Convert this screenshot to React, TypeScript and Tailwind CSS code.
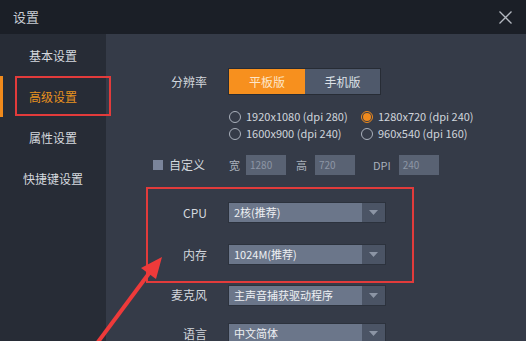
import React from "react";

const font = { fontFamily: '"Noto Sans CJK SC", "Noto Sans", sans-serif' };

const menu = ["基本设置", "高级设置", "属性设置", "快捷键设置"];

function Select({ value }: { value: string }) {
  return (
    <div className="flex h-[19px] w-[156px] shadow-[0_0_0_1px_#2c323d]">
      <div className="flex-1 bg-[#6b768a] text-[11px] leading-[19px] text-[#eef0f3] pl-[5px]">{value}</div>
      <div className="w-[23px] bg-[#4b5465] flex items-center justify-center">
        <svg width="9" height="5" viewBox="0 0 9 5">
          <path d="M0 0h9L4.5 5z" fill="#8c95a5" />
        </svg>
      </div>
    </div>
  );
}

function Radio({ label, checked }: { label: string; checked?: boolean }) {
  return (
    <div className="flex items-center h-[17px] text-[11px] text-[#d0d5dc]">
      <span
        className={
          "w-[12px] h-[12px] rounded-full border flex items-center justify-center mr-[5px] " +
          (checked ? "border-[#f08a1c]" : "border-[#aab1bc]")
        }
      >
        {checked && <span className="w-[8px] h-[8px] rounded-full bg-[#f08a1c]" />}
      </span>
      {label}
    </div>
  );
}

function Row({ label, children, className }: { label: React.ReactNode; children: React.ReactNode; className?: string }) {
  return (
    <div className={"flex items-center " + (className || "")}>
      <div className="w-[101px] flex justify-end items-center text-[12px] text-[#d3d7dd]">{label}</div>
      <div className="ml-[22px] flex items-center">{children}</div>
    </div>
  );
}

function Field({ value }: { value: string }) {
  return (
    <div className="w-[40px] h-[20px] bg-[#596273] text-[10px] leading-[20px] text-[#8d96a5] pl-[4px]">{value}</div>
  );
}

export default function App() {
  return (
    <div className="w-[526px] h-[341px] overflow-hidden flex flex-col bg-[#353b48]" style={font}>
      <header className="h-[34px] shrink-0 bg-[#1b1f27] flex items-center justify-between pl-[13px] pr-[14px]">
        <span className="text-[13px] text-[#c9cdd3]">设置</span>
        <svg width="13" height="13" viewBox="0 0 13 13">
          <path d="M0.5 0.5l12 12M12.5 0.5l-12 12" stroke="#b4b9c1" strokeWidth="1.3" />
        </svg>
      </header>

      <div className="relative flex flex-1 min-h-0">
        <aside className="w-[106px] shrink-0 bg-[#272c36] pt-[1px]">
          {menu.map((m, i) => (
            <div
              key={m}
              className={
                "relative h-[41px] flex items-center justify-center text-[12px] " +
                (i === 1 ? "text-[#e8921e]" : "text-[#d5d9df]")
              }
            >
              {i === 1 && <span className="absolute left-0 top-0 bottom-0 w-[3px] bg-[#f08a1c]" />}
              {m}
            </div>
          ))}
        </aside>

        <main className="relative flex-1 pt-[35px]">
          <Row label="分辨率" className="h-[25px]">
            <div className="flex h-[25px] shadow-[0_0_0_1px_#272c35] text-[12px]">
              <div className="w-[76px] bg-[#f7901e] text-[#fde6c8] flex items-center justify-center">平板版</div>
              <div className="w-[75px] bg-[#4f596b] text-[#dde1e7] flex items-center justify-center">手机版</div>
            </div>
          </Row>

          <div className="ml-[123px] mt-[14px] grid grid-cols-[132px_auto]">
            <Radio label="1920x1080 (dpi 280)" />
            <Radio label="1280x720 (dpi 240)" checked />
            <Radio label="1600x900 (dpi 240)" />
            <Radio label="960x540 (dpi 160)" />
          </div>

          <Row
            className="mt-[13px] h-[20px]"
            label={
              <>
                <span className="w-[10px] h-[10px] bg-[#7a849a] mr-[6px]" />
                <span className="text-[12px] mr-[2px]">自定义</span>
              </>
            }
          >
            <span className="text-[11px] text-[#aab1bc] mr-[6px]">宽</span>
            <Field value="1280" />
            <span className="text-[11px] text-[#aab1bc] ml-[10px] mr-[8px]">高</span>
            <Field value="720" />
            <span className="text-[11px] text-[#aab1bc] ml-[18px] mr-[8px]">DPI</span>
            <Field value="240" />
          </Row>

          <Row label="CPU" className="mt-[28px] h-[19px]">
            <Select value="2核(推荐)" />
          </Row>
          <Row label="内存" className="mt-[23px] h-[19px]">
            <Select value="1024M(推荐)" />
          </Row>
          <Row label="麦克风" className="mt-[22px] h-[18px]">
            <Select value="主声音捕获驱动程序" />
          </Row>
          <Row label="语言" className="mt-[20px] h-[19px]">
            <Select value="中文简体" />
          </Row>

          <div className="absolute left-[40px] top-[153px] w-[268px] h-[96px] border-2 border-[#e23b3b]" />
        </main>

        <div className="absolute left-[15px] top-[42px] w-[96px] h-[40px] border-2 border-[#e23b3b]" />

        <svg className="absolute left-0 top-0 pointer-events-none" width="526" height="307" viewBox="0 0 526 307">
          <line x1="95" y1="312" x2="150" y2="238" stroke="#ee3a3a" strokeWidth="4" />
          <path d="M162 223 L156 245 L141 234 Z" fill="#ee3a3a" />
        </svg>
      </div>
    </div>
  );
}
